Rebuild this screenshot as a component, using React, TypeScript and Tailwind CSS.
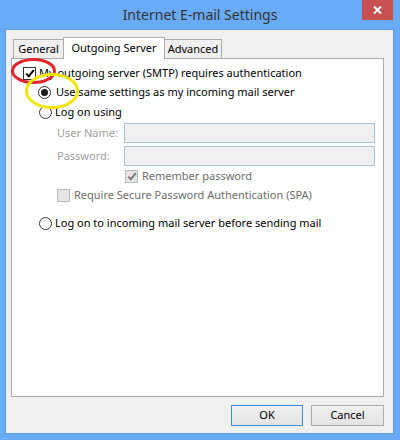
import React from "react";

function CheckBox({ checked, disabled }: { checked?: boolean; disabled?: boolean }) {
  return (
    <span
      className={`w-[13px] h-[13px] shrink-0 border flex items-center justify-center ${
        disabled ? "bg-[#e6e6e6] border-[#bcbcbc]" : "bg-white border-[#333333]"
      }`}
    >
      {checked && (
        <svg width="10" height="9" viewBox="0 0 10 9">
          <path d="M1.2 4.6 L3.8 7.2 L8.8 1.2" fill="none" stroke={disabled ? "#7a7a7a" : "#000"} strokeWidth="2" />
        </svg>
      )}
    </span>
  );
}

function Radio({ checked }: { checked?: boolean }) {
  return (
    <span className="w-[13px] h-[13px] shrink-0 rounded-full border border-[#333333] bg-white flex items-center justify-center">
      {checked && <span className="w-[7px] h-[7px] rounded-full bg-[#1a1a1a]" />}
    </span>
  );
}

export default function App() {
  return (
    <div className="relative w-[400px] h-[440px] bg-[#6aabf7] flex flex-col font-['Noto_Sans',sans-serif] text-[11px] text-black">
      {/* Title bar */}
      <div className="relative h-[29px] shrink-0 flex items-center justify-center">
        <span className="text-[14px] text-[#333333] -mt-[1px]">Internet E-mail Settings</span>
        <button className="absolute top-0 right-[7px] w-[31px] h-[20px] bg-[#c75050] flex items-center justify-center">
          <svg width="9" height="8" viewBox="0 0 9 8">
            <path d="M1 0.5 L8 7.5 M8 0.5 L1 7.5" stroke="#fff" strokeWidth="2" />
          </svg>
        </button>
      </div>

      {/* Client area */}
      <div className="ml-[5px] mr-[6px] mb-[6px] flex-1 flex flex-col bg-[#f0f0f0] border border-[#5b9be4] pl-[5px] pr-[9px] pt-[7px]">
        {/* Tabs */}
        <div className="flex items-end h-[21px] pl-[2px]">
          <div className="w-[50px] h-[19px] border-l border-t border-[#acacac] bg-[#f0f0f0] flex items-center justify-center">
            General
          </div>
          <div className="relative z-10 w-[102px] h-[22px] -mb-px border-l border-t border-r border-[#acacac] bg-white flex items-start justify-center pt-[2px]">
            Outgoing Server
          </div>
          <div className="w-[57px] h-[19px] border-t border-r border-[#acacac] bg-[#f0f0f0] flex items-center justify-center">
            Advanced
          </div>
        </div>

        {/* Tab panel */}
        <div className="flex-1 bg-white border border-[#acacac] flex flex-col pl-[11px] pt-[5px]">
          <div className="flex items-center gap-[3px] h-[19px]">
            <CheckBox checked />
            <span>My outgoing server (SMTP) requires authentication</span>
          </div>
          <div className="flex items-center gap-[5px] h-[19px] pl-[15px]">
            <Radio checked />
            <span>Use same settings as my incoming mail server</span>
          </div>
          <div className="flex items-center gap-[3px] h-[20px] pl-[16px]">
            <Radio />
            <span>Log on using</span>
          </div>
          <div className="flex items-center h-[20px] mt-[1px] pl-[34px]">
            <span className="w-[67px] text-[#a0a0a0]">User Name:</span>
            <div className="w-[251px] h-[20px] border border-[#adc2d9] bg-[#f0f0f0]" />
          </div>
          <div className="flex items-center h-[20px] mt-[3px] pl-[34px]">
            <span className="w-[67px] text-[#a0a0a0]">Password:</span>
            <div className="w-[251px] h-[20px] border border-[#adc2d9] bg-[#f0f0f0]" />
          </div>
          <div className="flex items-center gap-[4px] h-[19px] mt-[1px] pl-[102px] text-[#6d6d6d]">
            <CheckBox checked disabled />
            <span>Remember password</span>
          </div>
          <div className="flex items-center gap-[4px] h-[19px] pl-[34px] text-[#6d6d6d]">
            <CheckBox disabled />
            <span>Require Secure Password Authentication (SPA)</span>
          </div>
          <div className="flex items-center gap-[3px] h-[19px] mt-[9px] pl-[16px]">
            <Radio />
            <span>Log on to incoming mail server before sending mail</span>
          </div>
        </div>

        {/* Dialog buttons */}
        <div className="flex justify-end gap-[8px] pt-[8px] pb-[7px]">
          <button className="w-[72px] h-[21px] border border-[#3c8fe0] bg-gradient-to-b from-[#f0f0f0] to-[#e3e3e3] flex items-center justify-center">
            OK
          </button>
          <button className="w-[73px] h-[21px] border border-[#acacac] bg-gradient-to-b from-[#f0f0f0] to-[#e3e3e3] flex items-center justify-center">
            Cancel
          </button>
        </div>
      </div>

      {/* Hand-drawn annotations */}
      <svg className="absolute left-0 top-0 pointer-events-none" width="400" height="440">
        <ellipse cx="33.5" cy="71" rx="21" ry="11.5" fill="none" stroke="#e3242b" strokeWidth="3" />
        <ellipse cx="52" cy="91" rx="25.5" ry="16.5" fill="none" stroke="#f2e600" strokeWidth="3" />
      </svg>
    </div>
  );
}
